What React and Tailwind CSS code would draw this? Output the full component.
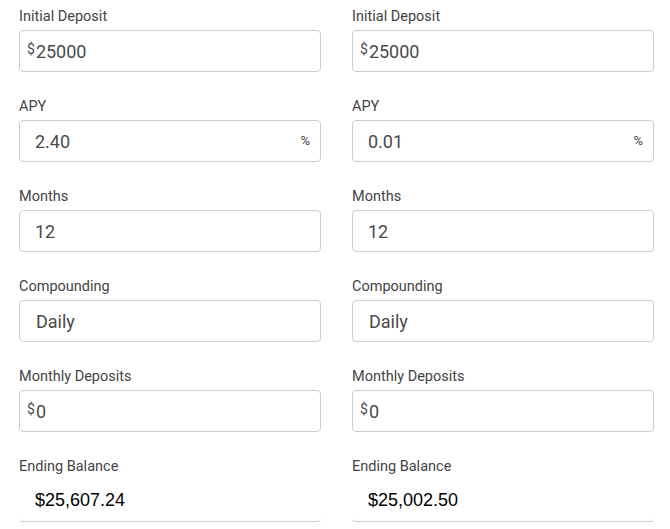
import React from "react";

const columns = [
  { deposit: "25000", apy: "2.40", months: "12", compounding: "Daily", monthly: "0", ending: "$25,607.24" },
  { deposit: "25000", apy: "0.01", months: "12", compounding: "Daily", monthly: "0", ending: "$25,002.50" },
];

function Label({ children }) {
  return <div className="text-[14.5px] leading-5 text-[#444] mb-[3px]">{children}</div>;
}

function Box({ children, className = "" }) {
  return (
    <div className={"h-[42px] border border-[#ccc] rounded flex items-center text-[18px] text-[#4a4a4a] " + className}>
      {children}
    </div>
  );
}

function Column({ c }) {
  return (
    <div className="w-[302px] flex flex-col gap-[25px]">
      <div>
        <Label>Initial Deposit</Label>
        <Box className="pl-[7px]">
          <span className="text-[14px] leading-none self-start mt-[11px] mr-[1px]">$</span>
          <span>{c.deposit}</span>
        </Box>
      </div>
      <div>
        <Label>APY</Label>
        <Box className="pl-[15px] pr-[10px] justify-between">
          <span>{c.apy}</span>
          <span className="text-[13px]">%</span>
        </Box>
      </div>
      <div>
        <Label>Months</Label>
        <Box className="pl-[15px]">{c.months}</Box>
      </div>
      <div>
        <Label>Compounding</Label>
        <Box className="pl-[16px]">{c.compounding}</Box>
      </div>
      <div>
        <Label>Monthly Deposits</Label>
        <Box className="pl-[7px]">
          <span className="text-[14px] leading-none self-start mt-[11px] mr-[1px]">$</span>
          <span>{c.monthly}</span>
        </Box>
      </div>
      <div>
        <Label>Ending Balance</Label>
        <div className="h-[42px] border-b border-[#ccc] rounded-b flex items-center pl-[16px] text-[18px] text-black font-['Liberation_Sans',Arial,sans-serif]">
          {c.ending}
        </div>
      </div>
    </div>
  );
}

export default function App() {
  return (
    <div className="bg-white min-h-screen pt-[7px] pl-[19px] flex gap-[31px] font-['Roboto',sans-serif]">
      {columns.map((c, i) => (
        <Column key={i} c={c} />
      ))}
    </div>
  );
}
